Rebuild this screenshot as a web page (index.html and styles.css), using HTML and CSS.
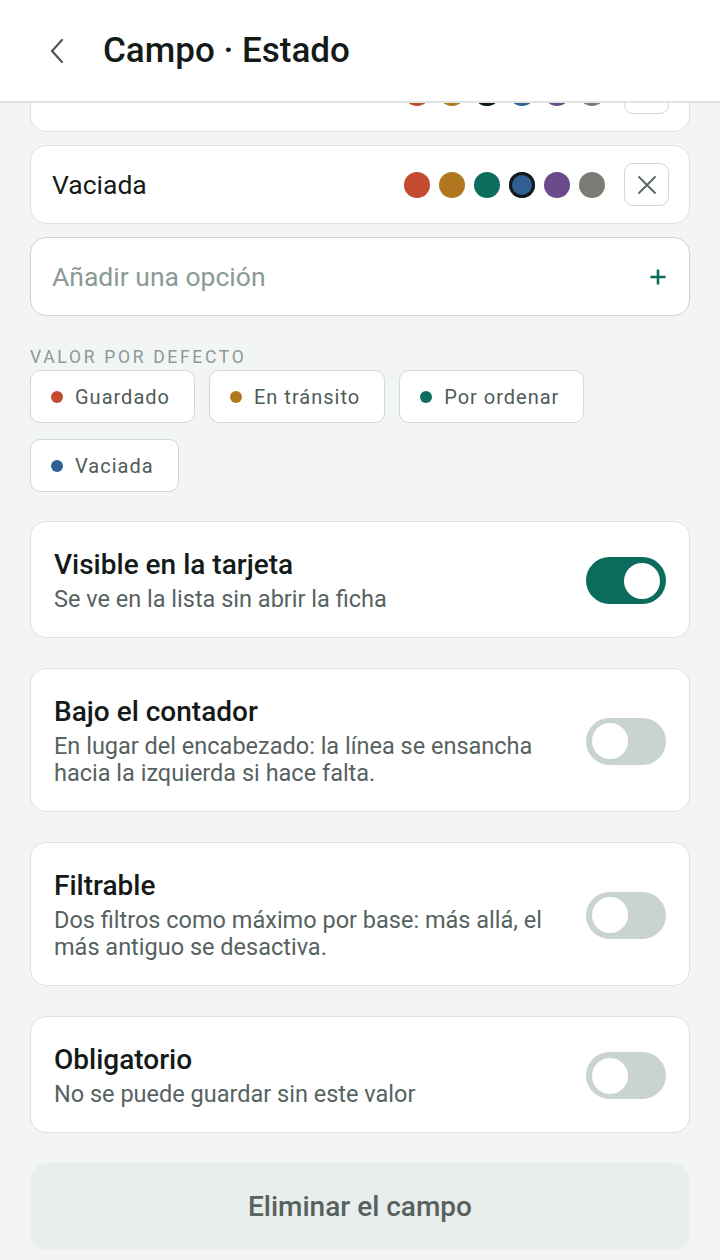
FILE: index.html
```html
<!DOCTYPE html>
<html lang="es">
<head>
<meta charset="utf-8">
<title>Campo · Estado</title>
<link rel="stylesheet" href="styles.css">
</head>
<body>
<header class="appbar">
  <button class="back" aria-label="Volver">
    <svg width="16" height="26" viewBox="0 0 16 26"><path d="M13 2 L3 13 L13 24" fill="none" stroke="#4d5856" stroke-width="2.2" stroke-linecap="round" stroke-linejoin="round"/></svg>
  </button>
  <h1 class="title">Campo · Estado</h1>
</header>

<main class="content">
  <section class="options">
    <div class="option">
      <span class="option-name">Por ordenar</span>
      <div class="swatches">
        <span class="swatch red"></span>
        <span class="swatch orange"></span>
        <span class="swatch teal selected"></span>
        <span class="swatch blue"></span>
        <span class="swatch purple"></span>
        <span class="swatch gray"></span>
      </div>
      <button class="remove" aria-label="Eliminar"><svg width="20" height="20" viewBox="0 0 20 20"><path d="M2 2 L18 18 M18 2 L2 18" stroke="#58625f" stroke-width="1.8" stroke-linecap="round"/></svg></button>
    </div>
    <div class="option">
      <span class="option-name">Vaciada</span>
      <div class="swatches">
        <span class="swatch red"></span>
        <span class="swatch orange"></span>
        <span class="swatch teal"></span>
        <span class="swatch blue selected"></span>
        <span class="swatch purple"></span>
        <span class="swatch gray"></span>
      </div>
      <button class="remove" aria-label="Eliminar"><svg width="20" height="20" viewBox="0 0 20 20"><path d="M2 2 L18 18 M18 2 L2 18" stroke="#58625f" stroke-width="1.8" stroke-linecap="round"/></svg></button>
    </div>
    <div class="option add">
      <span class="placeholder">Añadir una opción</span>
      <svg width="16" height="16" viewBox="0 0 16 16"><path d="M8 0.5 V15.5 M0.5 8 H15.5" stroke="#0b6b5c" stroke-width="2.6"/></svg>
    </div>
  </section>

  <section class="defaults">
    <div class="label">VALOR POR DEFECTO</div>
    <div class="chips">
      <span class="chip"><span class="dot red"></span>Guardado</span>
      <span class="chip"><span class="dot orange"></span>En tránsito</span>
      <span class="chip"><span class="dot teal"></span>Por ordenar</span>
      <span class="chip"><span class="dot blue"></span>Vaciada</span>
    </div>
  </section>

  <section class="settings">
    <div class="setting">
      <div class="setting-text">
        <div class="setting-title">Visible en la tarjeta</div>
        <div class="setting-desc">Se ve en la lista sin abrir la ficha</div>
      </div>
      <span class="toggle on"><span class="knob"></span></span>
    </div>
    <div class="setting">
      <div class="setting-text">
        <div class="setting-title">Bajo el contador</div>
        <div class="setting-desc">En lugar del encabezado: la línea se ensancha hacia la izquierda si hace falta.</div>
      </div>
      <span class="toggle"><span class="knob"></span></span>
    </div>
    <div class="setting">
      <div class="setting-text">
        <div class="setting-title">Filtrable</div>
        <div class="setting-desc">Dos filtros como máximo por base: más allá, el más antiguo se desactiva.</div>
      </div>
      <span class="toggle"><span class="knob"></span></span>
    </div>
    <div class="setting">
      <div class="setting-text">
        <div class="setting-title">Obligatorio</div>
        <div class="setting-desc">No se puede guardar sin este valor</div>
      </div>
      <span class="toggle"><span class="knob"></span></span>
    </div>
  </section>

  <button class="delete">Eliminar el campo</button>
</main>
</body>
</html>
```

FILE: styles.css
```css
* { box-sizing: border-box; }
html, body { margin: 0; padding: 0; }
body {
  background: #f3f5f4;
  font-family: Roboto, "Liberation Sans", sans-serif;
  color: #161c1a;
  width: 720px;
  height: 1260px;
  overflow: hidden;
}
.appbar {
  position: fixed;
  top: 0; left: 0; right: 0;
  height: 103px;
  background: #fff;
  border-bottom: 2px solid #dfe5e3;
  display: flex;
  align-items: center;
  z-index: 10;
}
.back {
  border: 0; background: none; padding: 0;
  width: 16px; height: 26px;
  margin-left: 49px;
  margin-right: 38px;
  display: flex;
}
.title {
  margin: 0;
  font-size: 35px;
  font-weight: 500;
  color: #141a18;
  letter-spacing: 0;
}
.content {
  padding: 53px 30px 0;
}
.options { display: flex; flex-direction: column; gap: 13px; }
.option {
  height: 79px;
  background: #fff;
  border: 1.5px solid #dde3e1;
  border-radius: 16px;
  display: flex;
  align-items: center;
  padding: 0 20px 0 21px;
}
.option-name { font-size: 26.5px; flex: 1; color: #161c1a; }
.swatches { display: flex; gap: 9px; margin-right: 19px; }
.swatch { width: 26px; height: 26px; border-radius: 50%; display: block; }
.swatch.selected { box-shadow: inset 0 0 0 3px #141a18; }
.red { background: #c24a2f; }
.orange { background: #b0771e; }
.teal { background: #0b6e5e; }
.blue { background: #2f6090; }
.purple { background: #6b4a8c; }
.gray { background: #7b7b73; }
.remove {
  width: 45px; height: 43px;
  border: 1.5px solid #cdd7d4;
  border-radius: 9px;
  background: #fff;
  display: flex; align-items: center; justify-content: center;
  padding: 0;
}
.option.add {
  border-color: #cbd5d2;
  padding-right: 23px;
}
.placeholder { flex: 1; font-size: 26.5px; color: #8a9a95; }

.defaults { margin-top: 30px; }
.label {
  font-size: 17.5px;
  letter-spacing: 2.7px;
  color: #8a9a95;
  line-height: 22px;
  margin-bottom: 2px;
}
.chips { display: flex; flex-wrap: wrap; gap: 16px 14px; }
.chip {
  height: 53px;
  display: inline-flex;
  align-items: center;
  gap: 12px;
  padding: 0 24px 0 20px;
  background: #fff;
  border: 1.5px solid #cfd9d5;
  border-radius: 10px;
  font-size: 20px;
  letter-spacing: 1px;
  color: #4f5b58;
}
.dot { width: 12px; height: 12px; border-radius: 50%; display: block; }

.settings {
  margin-top: 29px;
  display: flex; flex-direction: column; gap: 30px;
}
.setting {
  background: #fff;
  border: 1.5px solid #dde3e1;
  border-radius: 16px;
  padding: 26px 23px 24px 23px;
  display: flex;
  align-items: center;
  gap: 30px;
}
.setting-text { flex: 1; }
.setting-title { font-size: 28px; font-weight: 500; line-height: 34px; color: #141a18; }
.setting-desc { font-size: 23.5px; line-height: 27px; color: #56625f; margin-top: 4px; }
.toggle {
  width: 80px; height: 47px;
  border-radius: 24px;
  background: #c9d3cf;
  display: flex;
  align-items: center;
  padding: 0 6px;
  flex-shrink: 0;
}
.toggle .knob { width: 36px; height: 36px; border-radius: 50%; background: #fff; display: block; }
.toggle.on { background: #0b6b5c; justify-content: flex-end; }

.delete {
  margin-top: 30px;
  width: 100%;
  height: 87px;
  border: 0;
  border-radius: 18px;
  background: #e9edec;
  font-family: Roboto, "Liberation Sans", sans-serif;
  font-size: 28px;
  font-weight: 500;
  color: #56625f;
}
```
